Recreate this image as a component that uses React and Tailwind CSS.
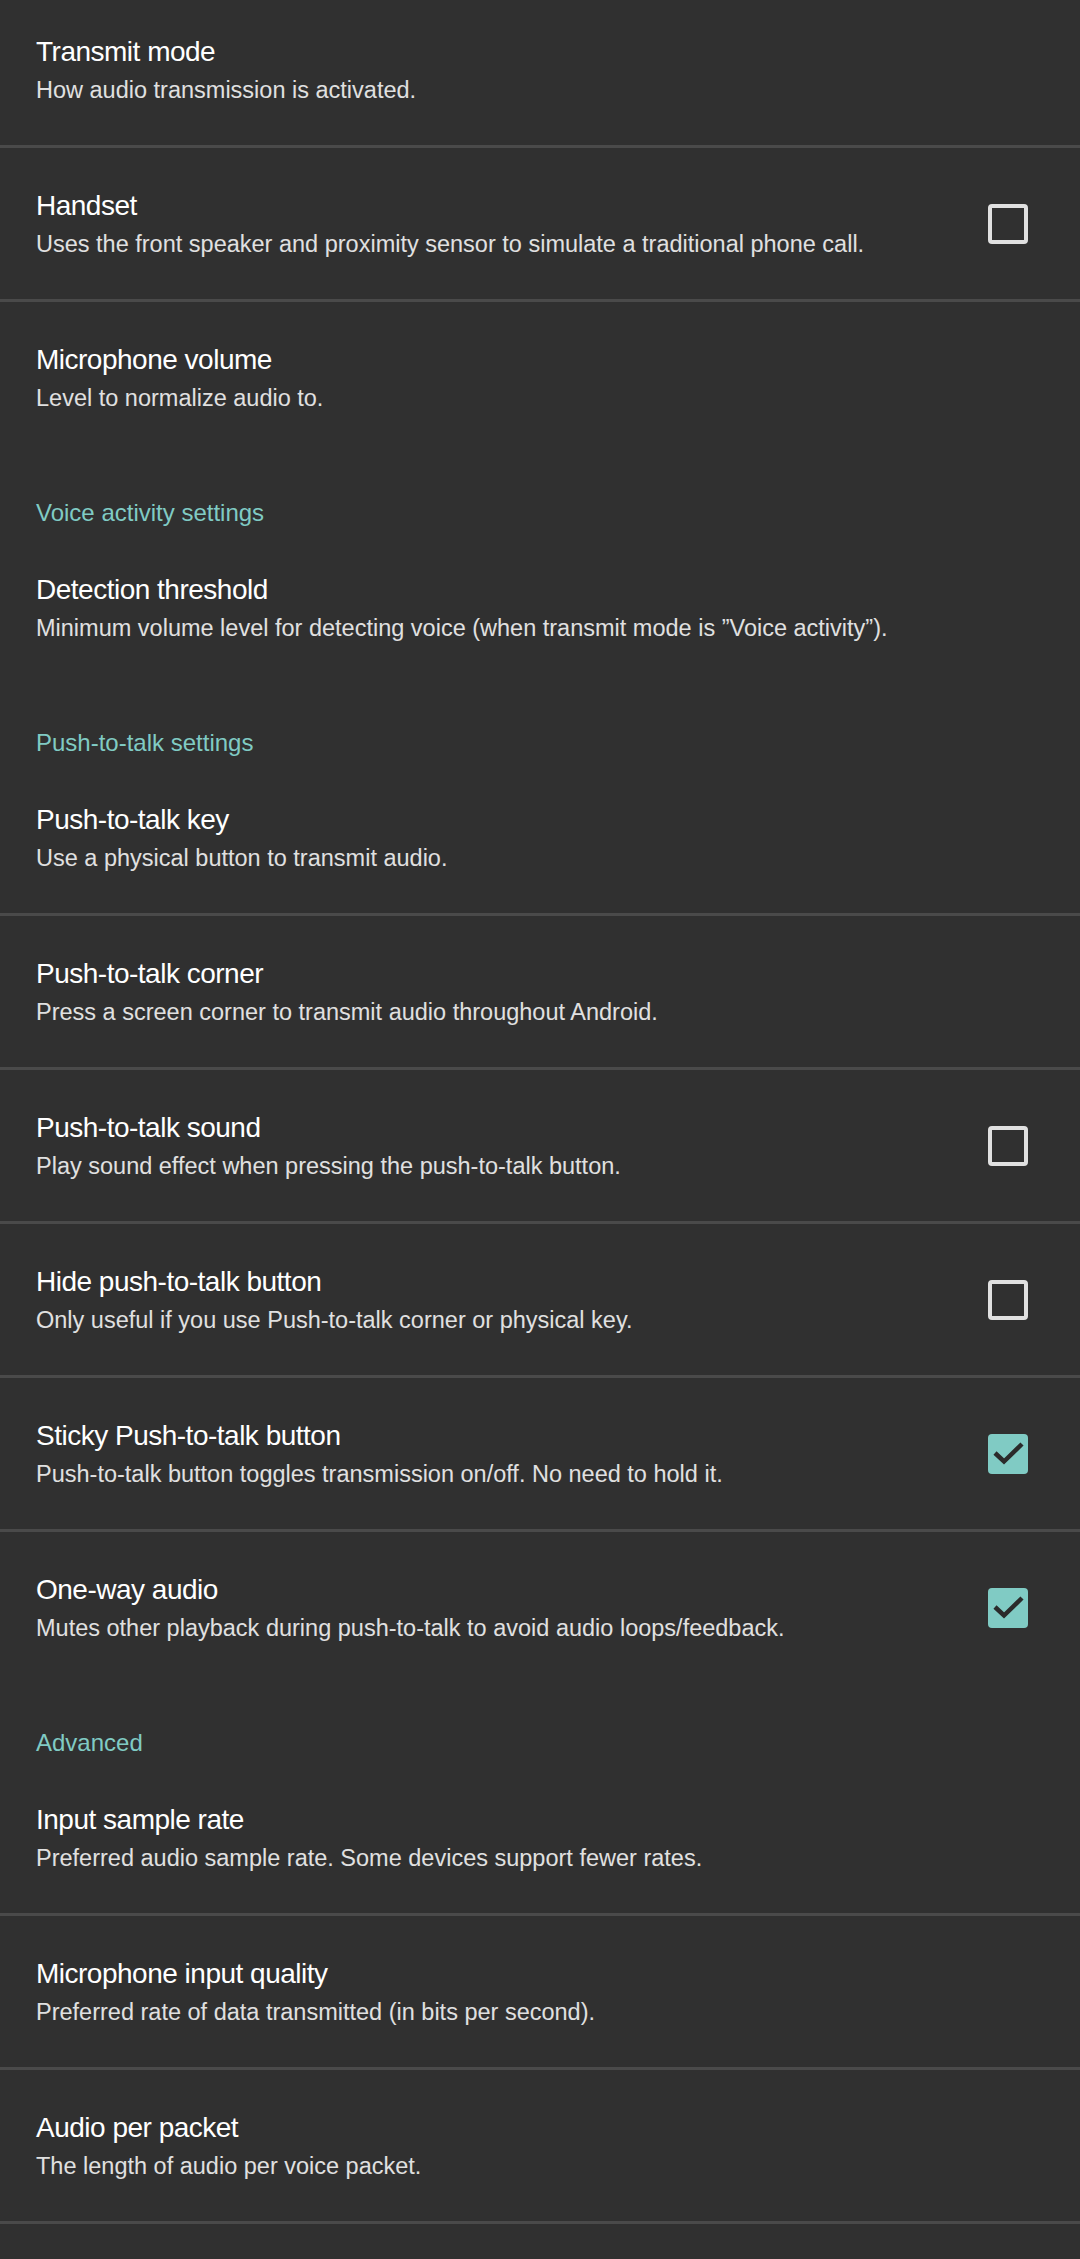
import React from "react";

const sections = [
  {
    header: null,
    items: [
      { title: "Transmit mode", desc: "How audio transmission is activated.", divider: true },
      {
        title: "Handset",
        desc: "Uses the front speaker and proximity sensor to simulate a traditional phone call.",
        check: false,
        divider: true,
      },
      { title: "Microphone volume", desc: "Level to normalize audio to." },
    ],
  },
  {
    header: "Voice activity settings",
    items: [
      {
        title: "Detection threshold",
        desc: "Minimum volume level for detecting voice (when transmit mode is \u201dVoice activity\u201d).",
      },
    ],
  },
  {
    header: "Push-to-talk settings",
    items: [
      { title: "Push-to-talk key", desc: "Use a physical button to transmit audio.", divider: true },
      {
        title: "Push-to-talk corner",
        desc: "Press a screen corner to transmit audio throughout Android.",
        divider: true,
      },
      {
        title: "Push-to-talk sound",
        desc: "Play sound effect when pressing the push-to-talk button.",
        check: false,
        divider: true,
      },
      {
        title: "Hide push-to-talk button",
        desc: "Only useful if you use Push-to-talk corner or physical key.",
        check: false,
        divider: true,
      },
      {
        title: "Sticky Push-to-talk button",
        desc: "Push-to-talk button toggles transmission on/off. No need to hold it.",
        check: true,
        divider: true,
      },
      {
        title: "One-way audio",
        desc: "Mutes other playback during push-to-talk to avoid audio loops/feedback.",
        check: true,
      },
    ],
  },
  {
    header: "Advanced",
    items: [
      {
        title: "Input sample rate",
        desc: "Preferred audio sample rate. Some devices support fewer rates.",
        divider: true,
      },
      {
        title: "Microphone input quality",
        desc: "Preferred rate of data transmitted (in bits per second).",
        divider: true,
      },
      { title: "Audio per packet", desc: "The length of audio per voice packet.", divider: true },
    ],
  },
];

const Checkbox = ({ checked }) =>
  checked ? (
    <div className="w-10 h-10 rounded-[4px] bg-[#80cbc4]">
      <svg width="40" height="40" viewBox="0 0 40 40" fill="none">
        <path d="M7 19l9 8.5L34 10" stroke="#2b2b2b" strokeWidth="4.5" />
      </svg>
    </div>
  ) : (
    <div className="w-10 h-10 rounded-[4px] border-4 border-[#e0e0e0]" />
  );

const PrefRow = ({ item }) => (
  <>
    <div className="h-[151px] flex items-center pl-9 pr-[52px]">
      <div className="flex-1 min-w-0">
        <p className="text-[28px] leading-[40px] tracking-[-0.5px] text-white">{item.title}</p>
        <p className="text-[23.5px] leading-[36px] text-[#e0e0e0]">{item.desc}</p>
      </div>
      {item.check !== undefined && <Checkbox checked={item.check} />}
    </div>
    {item.divider && <div className="h-[3px] bg-[#4a4a4a]" />}
  </>
);

export default function App() {
  return (
    <div
      className="w-[1080px] h-[2259px] overflow-hidden bg-[#303030]"
      style={{ fontFamily: '"Liberation Sans", Arial, sans-serif' }}
    >
      {/* list is scrolled a few px, first row is clipped at the top */}
      <div className="-mt-[6px]">
        {sections.map((section, i) => (
          <div key={i}>
            {section.header && (
              <p className="pl-9 pt-[43px] pb-[2px] text-[24px] leading-[34px] text-[#80cbc4]">
                {section.header}
              </p>
            )}
            {section.items.map((item) => (
              <PrefRow key={item.title} item={item} />
            ))}
          </div>
        ))}
      </div>
    </div>
  );
}
